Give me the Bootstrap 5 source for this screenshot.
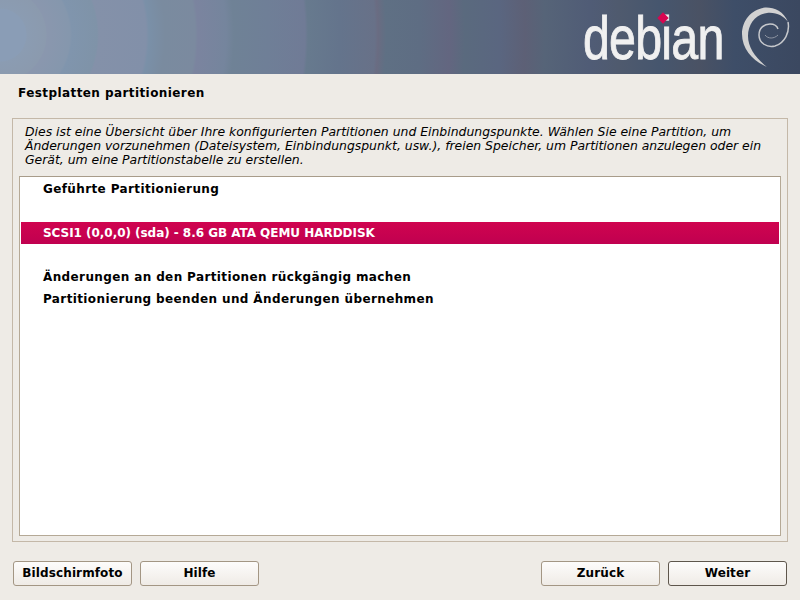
<!DOCTYPE html>
<html lang="de">
<head>
<meta charset="utf-8">
<title>Festplatten partitionieren</title>
<link href="https://cdn.jsdelivr.net/npm/bootstrap@5.3.0/dist/css/bootstrap.min.css" rel="stylesheet">
<style>
html,body{height:100%;margin:0;overflow:hidden}
body{background:#eeebe6;color:#000;font-family:"DejaVu Sans",sans-serif;font-size:12px}
.shell{width:800px;height:600px}
.banner{height:74px;flex:none;position:relative;overflow:hidden;
background:radial-gradient(circle 830px at 0 35px,
#8a9db6 0,#8a9db6 26px,#8b9cb2 27px,#8b9aae 46px,#8a97ae 47px,#8597ad 70px,#8095ad 72px,#7f93a8 97px,#8491a9 99px,#8290a9 146px,#7a90a8 149px,#7a8b9f 165px,#7b8a9f 195px,#7b849f 198px,#75859d 226px,#6f8296 234px,#6f7f97 268px,#707b96 305px,#677a8e 308px,#64748c 340px,#687188 375px,#6a6c82 378px,#5f7084 386px,#5e6d83 420px,#636680 450px,#5a6a7e 465px,#5a6680 500px,#5d6076 525px,#566478 545px,#505c76 590px,#4f5a6e 620px,#46566e 660px,#4a5264 700px,#3e4e68 735px,#3b4860 800px)}
.wordmark{position:absolute;left:583px;top:5px;font-family:"Liberation Sans",sans-serif;font-size:62px;line-height:66px;color:#f0f0f0;letter-spacing:-1px;-webkit-text-stroke:.9px #f0f0f0;transform:scaleX(.78);transform-origin:0 0}
.gem{position:absolute;left:659px;top:14px;width:8px;height:8px;background:#d70751;transform:rotate(45deg)}
.swirl{position:absolute;left:738px;top:4px;width:52px;height:66px}
.heading{height:37px;flex:none;padding:1px 0 0 18px;font-weight:700;font-size:12px;line-height:36px;letter-spacing:.42px}
.frame{position:relative;margin:7px 12px 0;height:424px;flex:none;border:1px solid #c4b8a8;padding:6px 6px 5px 6px}
.intro{font-style:italic;font-size:12.42px;line-height:14px;height:46px;margin:0;padding-left:6px;white-space:nowrap}
.chooser{height:360px;margin-top:5px;border:1px solid #b5a996;border-top-color:#a89c8a;background:#fff;padding:1px}
.entry{height:22px;padding-left:22px;font-weight:700;font-size:12px;line-height:22px;letter-spacing:.38px}
.entry.picked{background:#c8004f;background:linear-gradient(#d0044f,#c00050);color:#fff;letter-spacing:-.04px}
.footerbar{padding:19px 13px 0}
.pushbtn{width:119px;height:25px;padding:0 0 2px;border:1px solid #a39684;border-radius:3px;background:linear-gradient(#fdfcfb,#efebe6);font-weight:700;font-size:12px;line-height:20px;letter-spacing:.12px;color:#000;--bs-btn-hover-bg:#f6f4f1;--bs-btn-hover-color:#000}
.pushbtn.primed{border-color:#5e564c}
</style>
</head>
<body>
<div class="shell d-flex flex-column">
  <header class="banner">
    <span class="wordmark">debian</span>
    <span class="gem"></span>
    <svg class="swirl" viewBox="0 0 52 66" aria-hidden="true">
      <path d="M50 18C46 7 35 3 27 3.500C14 5 4 16 4 30C4 45 15 57 29 63C18 54 10 44 10 32C10 20 18 10 29 9C38 8 46 12 50 18Z" fill="#d2d2d2"/>
      <path d="M50 18C52 28 47 39 37 42C29 44 21 39 21 31C21 24 26 20 32 20C36 20 39 22 40 25" fill="none" stroke="#c6c8cc" stroke-width="1.5"/>
      <path d="M40 31C36 35 30 35 27 31" fill="none" stroke="#8f96a3" stroke-width="1"/>
    </svg>
  </header>
  <div class="heading">Festplatten partitionieren</div>
  <main class="frame">
    <p class="intro">Dies ist eine Übersicht über Ihre konfigurierten Partitionen und Einbindungspunkte. Wählen Sie eine Partition, um<br>Änderungen vorzunehmen (Dateisystem, Einbindungspunkt, usw.), freien Speicher, um Partitionen anzulegen oder ein<br>Gerät, um eine Partitionstabelle zu erstellen.</p>
    <div class="chooser">
      <div class="entry">Geführte Partitionierung</div>
      <div class="entry"></div>
      <div class="entry picked">SCSI1 (0,0,0) (sda) - 8.6 GB ATA QEMU HARDDISK</div>
      <div class="entry"></div>
      <div class="entry">Änderungen an den Partitionen rückgängig machen</div>
      <div class="entry">Partitionierung beenden und Änderungen übernehmen</div>
    </div>
  </main>
  <footer class="footerbar d-flex justify-content-between">
    <div class="d-flex gap-2">
      <button type="button" class="btn pushbtn">Bildschirmfoto</button>
      <button type="button" class="btn pushbtn">Hilfe</button>
    </div>
    <div class="d-flex gap-2">
      <button type="button" class="btn pushbtn">Zurück</button>
      <button type="button" class="btn pushbtn primed">Weiter</button>
    </div>
  </footer>
</div>
</body>
</html>
